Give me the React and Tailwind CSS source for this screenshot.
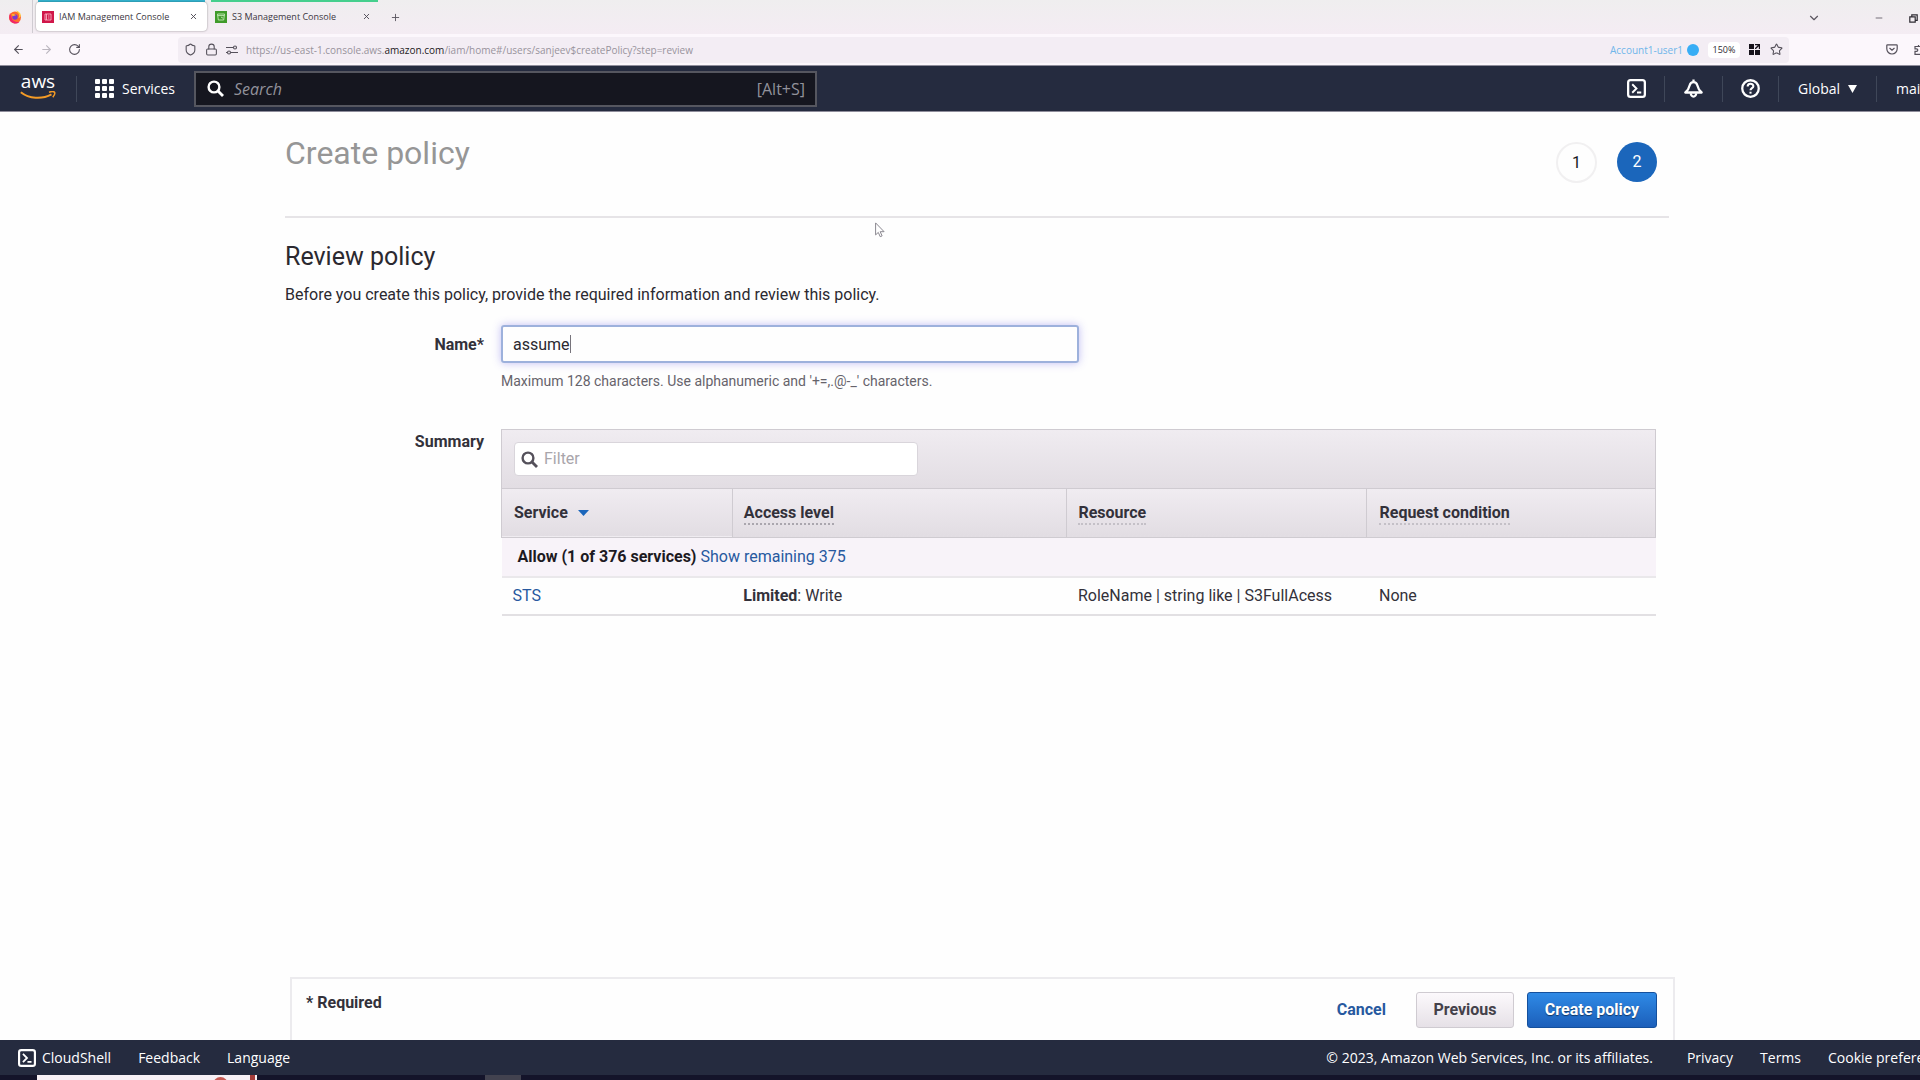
import React from "react";
import { ArrowLeft, ArrowRight, RotateCw, Shield, Lock, Star, X, Plus, ChevronDown, Minus } from "lucide-react";

function FirefoxIcon() {
  return (
    <svg viewBox="0 0 14 14" className="size-3.5" aria-hidden="true">
      <circle cx="7" cy="7.4" r="6" fill="#ff6b2d" />
      <path d="M2 3.6C.8 6 .9 9.600 3 11.700c2.600 2.400 6.400 2.200 8.300.2C8 12.600 4 11 3.500 7.600z" fill="#f0246a" />
      <path d="M8.200.6c.4 1.600 3 2.400 3 5.200 0 1-.3 1.600-.8 2.200 1.400-.2 2.200-1.400 2.400-2.800C12.400 3 10.600 1.200 8.200.6z" fill="#ffd23c" />
      <circle cx="7" cy="7" r="2.700" fill="#7a3ad0" />
      <path d="M3.600 4.600c1.600-1 3.400-.4 4.400.9-1.400-.2-2 .7-3.200.7z" fill="#ffb02e" />
    </svg>
  );
}

function IamIcon() {
  return (
    <svg viewBox="0 0 12 12" className="size-3 shrink-0" aria-hidden="true">
      <rect width="12" height="12" fill="#d0174a" />
      <path d="M3 3h6v6H3zM4.500 3v6M6 5h1.500M6 7h1.500" fill="none" stroke="#ffc3d2" strokeWidth=".8" />
    </svg>
  );
}

function S3Icon() {
  return (
    <svg viewBox="0 0 12 12" className="size-3 shrink-0" aria-hidden="true">
      <rect width="12" height="12" fill="#3f9b2a" />
      <path d="M2.500 3h7l-.8 6H3.300zM2.700 4.600h6.600M6 6l2 1.200" fill="none" stroke="#d5f3c8" strokeWidth=".8" />
    </svg>
  );
}

function SearchIcon({ className }) {
  return (
    <svg viewBox="0 0 17 17" className={className} fill="none" stroke="currentColor" strokeWidth="2.400" aria-hidden="true">
      <circle cx="7" cy="7" r="5.400" />
      <path d="M11 11l5 5" strokeWidth="2.800" />
    </svg>
  );
}

function Tab({ icon, label, active }) {
  return (
    <div
      className={
        "flex h-[29px] w-[171px] items-center rounded px-1.5 " +
        (active ? "bg-white shadow-[0_0_2px_rgba(0,0,0,0.45)]" : "")
      }
    >
      {icon}
      <span className="ml-[5px] flex-1 whitespace-nowrap text-[9px] leading-3 text-[#3b3742]">{label}</span>
      <button type="button" aria-label={"Close " + label} className="mr-[3px] text-[#4a4650]">
        <X className="size-[9px]" strokeWidth={2.4} />
      </button>
    </div>
  );
}

function TabStrip() {
  return (
    <div className="flex h-[34px] items-start bg-gradient-to-b from-[#efeeef] to-[#f4ecf3]">
      <div className="flex h-[33px] w-[33px] items-center justify-center border-r border-[#cfcbd1] pr-0.5">
        <FirefoxIcon />
      </div>
      <div className="ml-[3px]">
        <div className="mx-0.5 h-0.5 bg-[#35b4cf]" />
        <Tab active icon={<IamIcon />} label="IAM Management Console" />
      </div>
      <div className="ml-0.5">
        <div className="mx-0.5 h-0.5 bg-[#45cf8d]" />
        <Tab icon={<S3Icon />} label="S3 Management Console" />
      </div>
      <button type="button" aria-label="New tab" className="mt-3 ml-2.5 text-[#5b5760]">
        <Plus className="size-[11px]" strokeWidth={2} />
      </button>
      <div className="mt-[11px] ml-auto flex items-center text-[#5b5760]">
        <button type="button" aria-label="List all tabs" className="mr-[53px]">
          <ChevronDown className="size-3.5" />
        </button>
        <button type="button" aria-label="Minimize" className="mr-[25px]">
          <Minus className="size-[10px]" />
        </button>
        <button type="button" aria-label="Restore" className="mr-0.5">
          <svg viewBox="0 0 9 9" className="size-[9px]" fill="none" stroke="#2e2b33" strokeWidth="1.200">
            <path d="M.8 2.800h5.400v5.400H.8zM2.800 2.600V.8h5.400v5.600H6.400" />
          </svg>
        </button>
      </div>
    </div>
  );
}

function AddressBar() {
  return (
    <div className="flex h-8 items-center border-b border-[#8f8d9b] bg-[#fcf7fc]">
      <div className="flex w-[178px] items-center pl-3 text-[#55515b]">
        <button type="button" aria-label="Back"><ArrowLeft className="size-[13px]" /></button>
        <button type="button" aria-label="Forward" className="ml-[15px] text-[#bbb6bf]"><ArrowRight className="size-[13px]" /></button>
        <button type="button" aria-label="Reload" className="ml-[15px]"><RotateCw className="size-[13px]" /></button>
      </div>
      <div className="flex h-[26px] flex-1 items-center rounded-sm bg-[#f3edf4] pl-1.5 text-[#55515b]">
        <Shield className="size-[13px]" />
        <Lock className="ml-2 size-[13px]" />
        <svg viewBox="0 0 12 10" className="ml-2 h-[10px] w-3" fill="none" stroke="currentColor" strokeWidth="1.100" aria-hidden="true">
          <path d="M0 2.500h7M5 7.500h7M0 7.500h1" />
          <circle cx="9" cy="2.500" r="1.500" />
          <circle cx="3" cy="7.500" r="1.500" />
        </svg>
        <span className="ml-2 flex-1 whitespace-nowrap text-[10px] leading-4 text-[#98939c]">
          https://us-east-1.console.aws.<span className="text-[#1d1a22]">amazon.com</span>/iam/home#/users/sanjeev$createPolicy?step=review
        </span>
        <span className="text-[10px] leading-4 text-[#6fb6ea]">Account1-user1</span>
        <span className="ml-1 size-3 rounded-full bg-[#37adf5]" />
        <button type="button" className="ml-[9px] h-4 w-8 rounded-sm bg-white text-[9px] text-[#2e2b33]">150%</button>
        <svg viewBox="0 0 11 11" className="ml-[9px] size-[11px]" fill="#15121a" aria-hidden="true">
          <path d="M0 0h5v5H0zM0 6h5v5H0zM6 6h5v5H6zM6 0h5v5H9.800V2.200L7 5H6V4l2.800-2.800H6z" />
        </svg>
        <button type="button" aria-label="Bookmark" className="mr-1.5 ml-[10px]"><Star className="size-[13px]" /></button>
      </div>
      <div className="flex w-[131px] items-center justify-end gap-4 overflow-hidden text-[#55515b]">
        <svg viewBox="0 0 12 11" className="h-[11px] w-3" fill="none" stroke="currentColor" strokeWidth="1.200" aria-hidden="true">
          <path d="M1.500.8h9q.7 0 .7.700v3.300a5.200 5.200 0 0 1-10.400 0V1.500q0-.7.700-.7zM3.500 4 6 6.300 8.500 4" />
        </svg>
        <svg viewBox="0 0 6 11" className="h-[11px] w-1.5" fill="none" stroke="currentColor" strokeWidth="1.200" aria-hidden="true">
          <path d="M6 2.500H4.500V1M6 2.500H1v2.300h1.500a1.300 1.300 0 0 1 0 2.600H1v3h5" />
        </svg>
      </div>
    </div>
  );
}

function AwsLogo() {
  return (
    <a href="#home" aria-label="AWS home" className="flex w-9 flex-col items-center text-white">
      <span className="-mt-1.5 text-[19px] leading-[19px] font-medium">aws</span>
      <svg viewBox="0 0 36 9" className="h-[9px] w-9" fill="none" stroke="#f49b26" aria-hidden="true">
        <path d="M.8 1.200C9 7.800 22 8.600 31.500 3.400" strokeWidth="2" />
        <path d="M29 1.200c2-.7 4.800-.8 5.500 0 .6.900-.3 3.400-1.700 5" strokeWidth="1.500" />
      </svg>
    </a>
  );
}

function TerminalIcon({ className }) {
  return (
    <svg viewBox="0 0 20 20" className={className} fill="none" stroke="currentColor" strokeWidth="2.400" aria-hidden="true">
      <rect x="1.200" y="1.200" width="17.600" height="17.600" rx="2.500" />
      <path d="M5.500 5.500 10 10l-4.500 4.500M10.500 14.200H15" strokeWidth="2" />
    </svg>
  );
}

function Divider() {
  return <span className="h-[26px] w-px bg-[#3f4759]" />;
}

function ConsoleNav() {
  return (
    <header className="flex h-[46px] items-center border-b border-[#8f8d9b] bg-[#252b3f] text-[14px] leading-5 font-medium text-white">
      <div className="flex w-[76px] items-center pl-5"><AwsLogo /></div>
      <Divider />
      <button type="button" className="ml-[18px] flex w-[99px] items-center gap-2">
        <svg viewBox="0 0 19 19" className="size-[19px]" fill="#fff" aria-hidden="true">
          {[0, 7, 14].map((y) => [0, 7, 14].map((x) => <rect key={x + "-" + y} x={x} y={y} width="5" height="5" rx="1" />))}
        </svg>
        Services
      </button>
      <label className="flex h-9 w-[623px] items-center border-2 border-[#55565f] bg-[#15161f] pr-2.5 pl-[11px]">
        <SearchIcon className="size-[17px]" />
        <input
          type="text"
          aria-label="Search"
          placeholder="Search"
          className="ml-2.5 min-w-0 flex-1 bg-transparent text-[16px] font-normal italic outline-none placeholder:text-[#92929b]"
        />
        <span className="text-[16px] font-normal text-[#92929b]">[Alt+S]</span>
      </label>
      <div className="ml-auto flex items-center">
        <button type="button" aria-label="CloudShell" className="mr-[18px]"><TerminalIcon className="size-[19px]" /></button>
        <Divider />
        <button type="button" aria-label="Notifications" className="mx-[19px]">
          <svg viewBox="0 0 20 20" className="size-[19px]" fill="none" stroke="currentColor" strokeWidth="2.400" strokeLinejoin="round" aria-hidden="true">
            <path d="M10 .4v3M1.400 14.200h17.200C16 12.200 14.700 9.600 14 6.600 13.400 4.300 12.100 3.300 10 3.300S6.600 4.300 6 6.600C5.300 9.600 4 12.200 1.400 14.200z" />
            <path d="M7.200 15a2.800 3.600 0 0 0 5.600 0" />
          </svg>
        </button>
        <Divider />
        <button type="button" aria-label="Help" className="mx-[18px]">
          <svg viewBox="0 0 20 20" className="size-[19px]" fill="none" stroke="currentColor" strokeWidth="2.400" aria-hidden="true">
            <circle cx="10" cy="10" r="8.700" />
            <path d="M7 8c0-4 6-3.800 6-.4 0 2-3 2.100-3 4.200" strokeWidth="2.200" />
            <path d="M10 13.400v2" strokeWidth="2.200" />
          </svg>
        </button>
        <Divider />
        <button type="button" className="ml-[19px] flex w-[78px] items-center gap-2">
          Global
          <svg viewBox="0 0 9 8" className="h-2 w-[9px]" fill="#fff" aria-hidden="true"><path d="M0 0h9L4.500 8z" /></svg>
        </button>
        <Divider />
        <button type="button" className="ml-[19px] w-6 text-left whitespace-nowrap">mai</button>
      </div>
    </header>
  );
}

function StepHeader() {
  return (
    <div className="flex h-[106px] items-start justify-between border-b-2 border-[#e6e4e7] pt-[21px] pr-3">
      <h1 className="text-[32px] leading-10 text-[#969696]">Create policy</h1>
      <ol className="mt-[9px] flex gap-5 text-[16px]">
        <li className="flex size-[41px] items-center justify-center rounded-full border-2 border-[#f1f0f1] text-[#16191f]">1</li>
        <li className="flex size-10 items-center justify-center rounded-full bg-[#1b66bb] text-white">2</li>
      </ol>
    </div>
  );
}

function SummaryTable() {
  return (
    <div className="flex-1 border-t border-[#cfcbd1]">
      <div className="flex h-[59px] items-center border-x border-b border-[#cfcbd1] bg-gradient-to-b from-[#f0ecf1] to-[#e2dde3] px-3">
        <label className="flex h-[34px] w-[404px] items-center rounded border border-[#d9d5db] bg-white px-1.5">
          <SearchIcon className="size-[17px] text-[#55515b]" />
          <input type="text" aria-label="Filter" placeholder="Filter" className="ml-1.5 min-w-0 flex-1 text-[16px] outline-none placeholder:text-[#a9a5ab]" />
        </label>
      </div>
      <table className="w-full table-fixed border-collapse text-left text-[16px] leading-6 text-[#33313a]">
        <colgroup>
          <col className="w-[20%]" />
          <col className="w-[29%]" />
          <col className="w-[26%]" />
          <col className="w-[25%]" />
        </colgroup>
        <thead>
          <tr className="h-12 border border-t-0 border-[#cfcbd1] bg-gradient-to-b from-[#f0ecf1] to-[#e2dde3]">
            <th className="border-r border-[#cfcbd1] px-3 font-bold">
              <button type="button" className="flex items-center gap-2.5">
                Service
                <svg viewBox="0 0 11 6" className="h-1.5 w-[11px]" fill="#1b66bb" aria-hidden="true"><path d="M0 0h11L5.500 6z" /></svg>
              </button>
            </th>
            <th className="border-r border-[#cfcbd1] px-[11px] font-bold">
              <span className="inline-block border-b-2 border-dotted border-[#aaa6ae] leading-5">Access level</span>
            </th>
            <th className="border-r border-[#cfcbd1] px-[11px] font-bold">
              <span className="inline-block border-b-2 border-dotted border-[#c4c0c7] leading-5">Resource</span>
            </th>
            <th className="px-3 font-bold">
              <span className="inline-block border-b-2 border-dotted border-[#c4c0c7] leading-5">Request condition</span>
            </th>
          </tr>
        </thead>
        <tbody>
          <tr className="h-10 border-b-2 border-[#eae8eb] bg-[#f8f3f9]">
            <td colSpan={4} className="px-4">
              <b className="text-[#1d1a22]">Allow (1 of 376 services)</b>{" "}
              <a href="#remaining" className="text-[#27599f]">Show remaining 375</a>
            </td>
          </tr>
          <tr className="h-[38px] border-b-2 border-[#e2e0e3]">
            <td className="px-[11px]"><a href="#sts" className="text-[#27599f]">STS</a></td>
            <td className="px-[11px]"><b>Limited</b>: Write</td>
            <td className="px-[11px] whitespace-nowrap">RoleName | string like | S3FullAcess</td>
            <td className="px-3">None</td>
          </tr>
        </tbody>
      </table>
    </div>
  );
}

function PolicyForm() {
  return (
    <form className="pt-[23px] text-[16px] leading-6 text-[#2b2930]" onSubmit={(e) => e.preventDefault()}>
      <h2 className="text-[25px] leading-8 text-[#2b2930]">Review policy</h2>
      <p className="mt-2.5">Before you create this policy, provide the required information and review this policy.</p>
      <div className="mt-[18px] flex">
        <label htmlFor="policy-name" className="w-[216px] shrink-0 pt-2 pr-[17px] text-right font-bold text-[#33313a]">Name*</label>
        <div className="relative">
          <input
            id="policy-name"
            type="text"
            defaultValue="assume"
            className="h-[38px] w-[578px] rounded-[3px] border-2 border-[#9db1dc] px-2.5 shadow-[0_0_8px_rgba(120,110,230,0.45)] outline-none"
          />
          <span className="absolute top-2.5 left-[69px] h-[18px] w-px bg-[#77747c]" />
          <p className="mt-2 text-[14px] leading-5 text-[#66636b]">Maximum 128 characters. Use alphanumeric and '+=,.@-_' characters.</p>
        </div>
      </div>
      <div className="mt-[38px] flex pr-[13px]">
        <span className="w-[216px] shrink-0 pt-px pr-[17px] text-right font-bold text-[#33313a]">Summary</span>
        <SummaryTable />
      </div>
    </form>
  );
}

function ActionBar() {
  return (
    <div className="mt-auto mr-[245px] ml-[290px] flex h-[63px] items-start justify-between border-2 border-b-0 border-[#ecebee] pt-3 pr-4 pl-3.5 text-[16px] leading-6 font-bold">
      <span className="text-[#33313a]">* Required</span>
      <div className="mt-px flex items-center">
        <button type="button" className="mr-[30px] text-[#27599f]">Cancel</button>
        <button type="button" className="mr-[13px] h-9 w-[98px] rounded-[3px] border border-[#cfcbd1] bg-gradient-to-b from-[#fcf9fc] to-[#e6e1e7] text-[#44414a]">Previous</button>
        <button type="button" className="h-9 w-[130px] rounded-[3px] border border-[#14509d] bg-gradient-to-b from-[#2f8ae6] to-[#1c5fba] text-white text-shadow-[0_1px_1px_rgba(0,0,0,0.5)]">Create policy</button>
      </div>
    </div>
  );
}

function ConsoleFooter() {
  return (
    <footer className="flex h-[35px] items-center bg-[#252b3f] text-[14px] leading-5 whitespace-nowrap text-white">
      <a href="#cloudshell" className="ml-[18px] flex items-center gap-1.5"><TerminalIcon className="size-[18px]" />CloudShell</a>
      <a href="#feedback" className="ml-[27px]">Feedback</a>
      <a href="#language" className="ml-[27px]">Language</a>
      <span className="ml-auto">© 2023, Amazon Web Services, Inc. or its affiliates.</span>
      <a href="#privacy" className="ml-[34px]">Privacy</a>
      <a href="#terms" className="ml-[27px]">Terms</a>
      <a href="#cookies" className="ml-[27px] w-[92px]">Cookie prefere</a>
    </footer>
  );
}

function Taskbar() {
  return (
    <div className="flex h-[5px] overflow-hidden bg-[#14142a]">
      <div className="ml-[37px] flex w-[220px] justify-end bg-[#f7f0f5]">
        <span className="mt-0.5 mr-[22px] size-[15px] shrink-0 rounded-full bg-[#c75b54]" />
        <span className="mr-0.5 w-[5px] bg-[#a33c3a]" />
      </div>
      <div className="ml-[228px] w-9 bg-[#42424f]" />
    </div>
  );
}

export default function App() {
  return (
    <div className="flex min-h-screen flex-col overflow-hidden bg-white font-['Open_Sans',sans-serif]">
      <TabStrip />
      <AddressBar />
      <ConsoleNav />
      <main className="relative flex flex-1 flex-col bg-[#fefefe] font-[Roboto,sans-serif]">
        <div className="mr-[251px] ml-[285px]">
          <StepHeader />
          <PolicyForm />
        </div>
        <ActionBar />
        <svg viewBox="0 0 10 16" className="absolute top-[110px] left-[875px] h-4 w-2.5" fill="#fff" stroke="#8b8890" aria-hidden="true">
          <path d="M.6.900v12l2.700-2.500 1.900 4.300 1.900-.8-1.900-4.200h3.900z" />
        </svg>
      </main>
      <ConsoleFooter />
      <Taskbar />
    </div>
  );
}
